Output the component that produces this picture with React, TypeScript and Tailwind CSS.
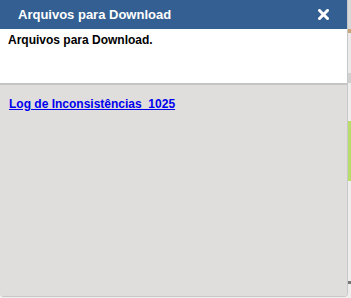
import React from 'react';

const App: React.FC = () => {
  return (
    <div className="w-[351px] h-[298px] flex bg-[#f0f0f0] font-['Liberation_Sans',Arial,sans-serif] overflow-hidden">
      {/* dialog */}
      <div className="w-[348px] h-[297px] flex flex-col rounded-b-[4px] border-b border-r border-[#c8c8c8] overflow-hidden">
        <div className="h-[29px] shrink-0 bg-[#335f93] flex items-center justify-between pl-[18px] pr-[18px]">
          <span className="text-white font-bold text-[13px]">Arquivos para Download</span>
          <svg width="11" height="11" viewBox="0 0 11 11">
            <path d="M1.5 1.5 L9.5 9.5 M9.5 1.5 L1.5 9.5" stroke="#fff" strokeWidth="3" strokeLinecap="square" />
          </svg>
        </div>
        <div className="h-[56px] shrink-0 bg-white px-2 pt-[2px] border-b-2 border-[#c4c4c4]">
          <p className="text-[12px] font-bold text-black">Arquivos para Download.</p>
        </div>
        <div className="flex-1 bg-[#dfdedc] px-[9px] pt-[6px]">
          <a href="#" className="text-[12px] font-bold text-[#0000ee] underline">Log de Inconsistências_1025</a>
        </div>
      </div>
      {/* page behind */}
      <div className="flex-1 flex flex-col">
        <div className="h-[29px] bg-[#d8d8d8]" />
        <div className="h-[4px] bg-[#c9a677]" />
        <div className="h-[40px] bg-[#eaeaea]" />
        <div className="h-[10px] bg-[#d0d0d0]" />
        <div className="h-[38px] bg-[#eeeeee]" />
        <div className="h-[60px] bg-[#b8dd6a]" />
        <div className="h-[100px] bg-[#eeeeee]" />
        <div className="h-[3px] bg-[#777]" />
        <div className="flex-1 bg-[#eeeeee]" />
      </div>
    </div>
  );
};

export default App;
